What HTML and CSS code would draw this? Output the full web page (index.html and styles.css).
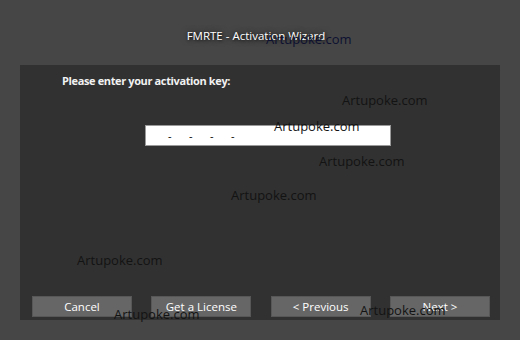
FILE: index.html
```html
<!DOCTYPE html>
<html lang="en">
<head>
    <meta charset="UTF-8">
    <meta name="viewport" content="width=device-width, initial-scale=1.0">
    <title>FMRTE - Activation Wizard</title>
    <link rel="stylesheet" href="styles.css">
</head>
<body>
    <div class="screen">
        <div class="title-bar">
            <h1 class="title">FMRTE - Activation Wizard</h1>
        </div>

        <div class="panel">
            <p class="prompt">Please enter your activation key:</p>

            <div class="key-input">
                <span>-</span>
                <span>-</span>
                <span>-</span>
                <span>-</span>
            </div>

            <div class="buttons">
                <button class="btn">Cancel</button>
                <button class="btn">Get a License</button>
                <button class="btn">&lt; Previous</button>
                <button class="btn">Next &gt;</button>
            </div>
        </div>

        <!-- watermark stamps over the window -->
        <span class="mark m1">Artupoke.com</span>
        <span class="mark m2">Artupoke.com</span>
        <span class="mark m3">Artupoke.com</span>
        <span class="mark m4">Artupoke.com</span>
        <span class="mark m5">Artupoke.com</span>
        <span class="mark m6">Artupoke.com</span>
        <span class="mark m7">Artupoke.com</span>
        <span class="mark m8">Artupoke.com</span>
    </div>
</body>
</html>
```

FILE: styles.css
```css
* {
    margin: 0;
    padding: 0;
    box-sizing: border-box;
}

body {
    font-family: "Open Sans", "Noto Sans", sans-serif;
    background: #464646;
    color: #fff;
    overflow: hidden;
}

.screen {
    position: relative;
    width: 520px;
    height: 340px;
    background: #464646;
}

.title-bar {
    height: 65px;
    padding-top: 29px;
    text-align: center;
    padding-right: 8px;
}

.title {
    font-size: 11.5px;
    font-weight: 400;
    line-height: 14px;
    color: #fff;
    text-shadow: 1px 1px 3px rgba(0, 0, 0, 0.7), 0 0 6px rgba(0, 0, 0, 0.5);
}

.panel {
    display: flex;
    flex-direction: column;
    height: 255px;
    margin: 0 20px;
    padding: 9px 10px 3px 12px;
    background: #313131;
}

.prompt {
    margin-left: 30px;
    font-size: 11px;
    font-weight: 700;
    line-height: 14px;
    letter-spacing: -0.37px;
    color: #f2f2f2;
}

.key-input {
    display: flex;
    align-items: center;
    width: 246px;
    height: 21px;
    margin: 37px 0 0 113px;
    padding-left: 22px;
    background: #fff;
    border: 1px solid #9a9a9a;
    color: #000;
    font-size: 11px;
    line-height: 1;
}

.key-input span {
    width: 21px;
}

.buttons {
    display: flex;
    justify-content: space-between;
    margin-top: auto;
}

.btn {
    width: 100px;
    height: 21px;
    background: #666;
    border: 1px solid #575757;
    color: #fff;
    font-family: inherit;
    font-size: 11.5px;
    line-height: 19px;
}

.mark {
    position: absolute;
    font-size: 13px;
    line-height: 1;
    color: #131313;
    white-space: nowrap;
}

.m1 { left: 266px; top: 32.5px; color: #0d1030; }
.m2 { left: 342px; top: 93.5px; }
.m3 { left: 274px; top: 120px; }
.m4 { left: 319px; top: 154.5px; }
.m5 { left: 231px; top: 189px; }
.m6 { left: 77px; top: 254px; }
.m7 { left: 114px; top: 307.5px; }
.m8 { left: 360px; top: 304px; }
```
